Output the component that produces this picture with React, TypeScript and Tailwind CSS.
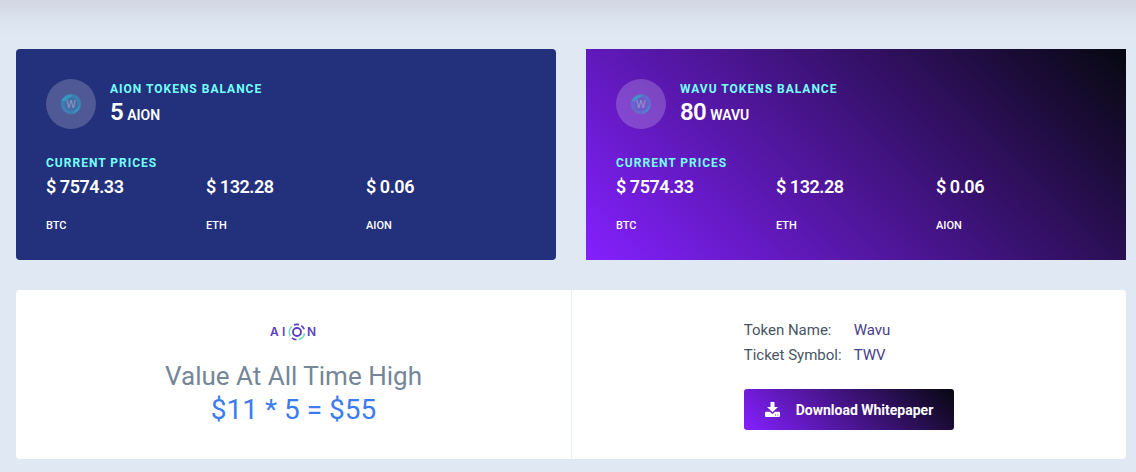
import React from 'react';

interface Price {
  value: string;
  symbol: string;
}

interface TokenCardProps {
  title: string;
  amount: number;
  unit: string;
  prices: Price[];
  className: string;
  coinColor: string;
}

const PRICES: Price[] = [
  { value: '7574.33', symbol: 'BTC' },
  { value: '132.28', symbol: 'ETH' },
  { value: '0.06', symbol: 'AION' },
];

const CoinIcon: React.FC<{ color: string }> = ({ color }) => (
  <svg viewBox="0 0 22 22" className="w-[22px] h-[22px]" aria-hidden="true">
    <circle cx="11" cy="11" r="8.5" fill="none" stroke={color} strokeWidth="3.5" opacity="0.8" />
    <circle cx="11" cy="11" r="7" fill={color} opacity="0.45" />
    <path d="M2 7.5A10 10 0 0 1 12 2.5L9 4.500 4.500 8zM20 13a10 10 0 0 1-7 7" fill="#36a6c8" stroke="#36a6c8" strokeWidth="0.8" opacity="0.7" />
    <path d="M3 14c1 3 3.500 4.800 6 5.300M16 4.500l2 2M17 15.500l-1.500 1.800" fill="none" stroke="#6d6fb4" strokeWidth="0.8" />
    <text x="11" y="15" textAnchor="middle" fontFamily="Roboto, sans-serif" fontSize="11" fill="#9b93c4">
      W
    </text>
  </svg>
);

const AionLogo = () => (
  <svg viewBox="0 0 48 18" className="w-[48px] h-[18px]" role="img" aria-label="AION">
    <g fontFamily="Inter, sans-serif" fontSize="12" fontWeight="600" fill="#5a3fc0">
      <text x="0" y="13">A</text>
      <text x="12" y="13">I</text>
      <text x="37" y="13">N</text>
    </g>
    <circle cx="27" cy="9" r="4" fill="none" stroke="#5a3fc0" strokeWidth="1.900" />
    <g fill="none" strokeWidth="1.700">
      <path d="M20.500 13.200A7.700 7.700 0 0 1 21.500 3.600" stroke="#6fe3c4" />
      <path d="M24 1.900A7.700 7.700 0 0 1 29 1.600" stroke="#5a3fc0" />
      <path d="M31.200 2.600A7.700 7.700 0 0 1 34.200 6.300" stroke="#5a3fc0" />
      <path d="M34.600 10.200A7.700 7.700 0 0 1 29 16.400" stroke="#6fe3c4" />
      <path d="M26.500 16.700A7.700 7.700 0 0 1 22 14.800" stroke="#5a3fc0" />
    </g>
  </svg>
);

const DownloadIcon = () => (
  <svg viewBox="0 0 15 15" className="w-[15px] h-[15px]" fill="currentColor" aria-hidden="true">
    <path d="M5.500 0h4v5H13L7.500 10.300 2 5h3.500z" />
    <path
      fillRule="evenodd"
      d="M1 9.800h4l1.500 1.500a1.400 1.400 0 0 0 2 0L10 9.800h4a1 1 0 0 1 1 1V14a1 1 0 0 1-1 1H1a1 1 0 0 1-1-1v-3.200a1 1 0 0 1 1-1zM10 12.500v1h1v-1zM12.300 12.500v1h1v-1z"
    />
  </svg>
);

const TokenCard: React.FC<TokenCardProps> = ({ title, amount, unit, prices, className, coinColor }) => (
  <section className={`p-[30px] pb-[26px] text-white ${className}`}>
    <div className="flex items-start">
      <div className="w-[50px] h-[50px] rounded-full bg-white/20 flex items-center justify-center">
        <CoinIcon color={coinColor} />
      </div>
      <div className="pl-[14px]">
        <h2 className="text-xs leading-5 font-bold tracking-[1px] text-[#74fffa] uppercase">{title}</h2>
        <p className="flex items-baseline gap-1 text-2xl leading-[26px] font-semibold">
          <span className="tracking-tight">{amount}</span>
          <span className="text-sm leading-5">{unit}</span>
        </p>
      </div>
    </div>
    <h3 className="mt-6 text-xs leading-5 font-bold tracking-[1px] text-[#74fffa] uppercase">Current Prices</h3>
    <ul className="grid grid-cols-3">
      {prices.map((price) => (
        <li key={price.symbol}>
          <p className="text-lg leading-7 font-semibold tracking-tight">$ {price.value}</p>
          <p className="mt-[17px] text-[11px] leading-4 font-medium">{price.symbol}</p>
        </li>
      ))}
    </ul>
  </section>
);

export default function App() {
  return (
    <main className="min-h-screen bg-[#e0e8f3] bg-[linear-gradient(to_bottom,#d3d5e3,#dbe3ee_18px,#e0e8f3_40px)] pt-[49px] pb-3 pl-4 pr-[10px] font-['Roboto',sans-serif]">
      <div className="grid grid-cols-2 gap-[30px]">
        <TokenCard
          title="Aion Tokens Balance"
          amount={5}
          unit="AION"
          prices={PRICES}
          className="rounded bg-[#23307c]"
          coinColor="#3489b8"
        />
        <TokenCard
          title="Wavu Tokens Balance"
          amount={80}
          unit="WAVU"
          prices={PRICES}
          className="bg-[linear-gradient(45deg,#8420ff,#060810)]"
          coinColor="#5c70cf"
        />
      </div>

      <div className="mt-[30px] grid grid-cols-2 rounded bg-white">
        <section className="flex flex-col items-center pt-[33px] pb-[31px]">
          <AionLogo />
          <h2 className="mt-[19px] text-[26px] leading-8 text-[#758698]">Value At All Time High</h2>
          <p className="text-[28px] leading-9 text-[#3c7cf0]">$11 * 5 = $55</p>
        </section>
        <section className="flex flex-col items-center border-l border-[#e6effb] pt-7">
          <div>
            <dl className="grid grid-cols-[110px_auto] text-[15px] leading-[25px] text-[#495463]">
              <dt>Token Name:</dt>
              <dd className="text-[#47408a]">Wavu</dd>
              <dt>Ticket Symbol:</dt>
              <dd className="text-[#47408a]">TWV</dd>
            </dl>
            <button
              type="button"
              className="mt-[21px] flex h-[41px] items-center gap-4 rounded-[3px] bg-[linear-gradient(45deg,#8420ff,#060810)] px-[21px] text-sm font-bold text-white"
            >
              <DownloadIcon />
              Download Whitepaper
            </button>
          </div>
        </section>
      </div>
    </main>
  );
}
